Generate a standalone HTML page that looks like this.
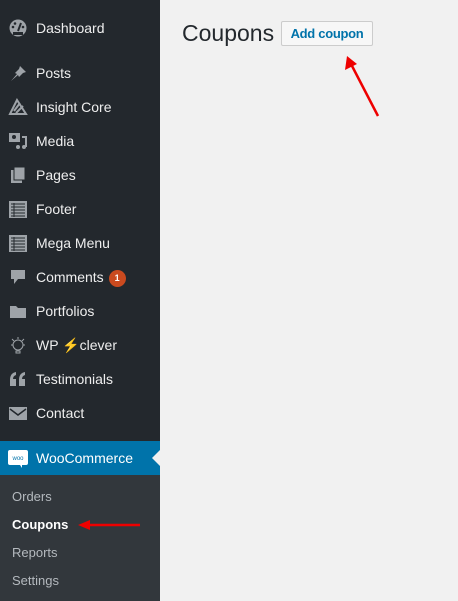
<!DOCTYPE html>
<html><head><style>
*{margin:0;padding:0;box-sizing:border-box}
body{width:458px;height:601px;background:#f1f1f1;font-family:"Liberation Sans",sans-serif;position:relative;overflow:hidden}
#side{position:absolute;left:0;top:0;width:160px;height:601px;background:#23282d}
.it{position:absolute;left:0;width:160px;height:34px;color:#eee;font-size:14px;line-height:34px;padding-left:36px}
.ic{position:absolute;left:8px;top:8px;width:20px;height:18px}
.woo{position:absolute;left:0;top:441px;width:160px;height:34px;background:#0073aa;color:#fff;font-size:14px;line-height:34px;padding-left:36px}
.sub{position:absolute;left:0;top:475px;width:160px;height:126px;background:#32373c}
.s{position:absolute;left:12px;font-size:13px;color:#b4b9be}
.badge{display:inline-block;width:17px;height:17px;border-radius:50%;background:#ca4a1f;color:#fff;font-size:9px;line-height:17px;text-align:center;vertical-align:middle;margin-left:5px;font-weight:bold}
</style></head><body>
<div id="side">
<div class="it" style="top:11px"><svg class="ic" viewBox="0 0 20 18"><circle cx="10" cy="9" r="8.5" fill="#9ea3a8"/><circle cx="5" cy="8" r="1.3" fill="#23282d"/><circle cx="7" cy="4.5" r="1.3" fill="#23282d"/><circle cx="15" cy="8" r="1.3" fill="#23282d"/><path d="M10 12 L13 4" stroke="#23282d" stroke-width="2"/><rect x="5" y="13" width="10" height="3" fill="#23282d"/></svg>Dashboard</div>
<div class="it" style="top:56px"><svg class="ic" viewBox="0 0 20 18"><path d="M12 2 L18 8 L15 9 L11 13 L10 11 L3 17 L9 10 L7 9 L11 5Z" fill="#9ea3a8"/></svg>Posts</div>
<div class="it" style="top:90px"><svg class="ic" viewBox="0 0 20 18"><path d="M2 16 L9 2 L18 16 Z M6 13 L12 5 M8 15 L15 8" stroke="#9ea3a8" stroke-width="2" fill="none"/></svg>Insight Core</div>
<div class="it" style="top:124px"><svg class="ic" viewBox="0 0 20 18"><rect x="1" y="1" width="11" height="9" fill="#9ea3a8"/><circle cx="6" cy="5" r="2" fill="#23282d"/><path d="M14 5 H18 V15" stroke="#9ea3a8" stroke-width="2" fill="none"/><circle cx="10" cy="15" r="2" fill="#9ea3a8"/><circle cx="16" cy="15" r="2" fill="#9ea3a8"/></svg>Media</div>
<div class="it" style="top:158px"><svg class="ic" viewBox="0 0 20 18"><rect x="3" y="4" width="11" height="13" fill="#9ea3a8"/><rect x="6" y="1" width="11" height="13" fill="#9ea3a8" stroke="#23282d"/></svg>Pages</div>
<div class="it" style="top:192px"><svg class="ic" viewBox="0 0 20 18"><rect x="1" y="1" width="18" height="17" fill="#9ea3a8"/><path d="M3 4h14M3 7h14M3 10h14M3 13h14M3 16h14M6 3v14" stroke="#23282d" stroke-width="1"/></svg>Footer</div>
<div class="it" style="top:226px"><svg class="ic" viewBox="0 0 20 18"><rect x="1" y="1" width="18" height="17" fill="#9ea3a8"/><path d="M3 4h14M3 7h14M3 10h14M3 13h14M3 16h14M6 3v14" stroke="#23282d" stroke-width="1"/></svg>Mega Menu</div>
<div class="it" style="top:260px"><svg class="ic" viewBox="0 0 20 18"><path d="M3 2 H17 V11 H10 L6 16 V11 H3Z" fill="#9ea3a8"/></svg>Comments<span class="badge">1</span></div>
<div class="it" style="top:294px"><svg class="ic" viewBox="0 0 20 18"><path d="M2 4 H8 L10 6 H18 V16 H2Z" fill="#9ea3a8"/></svg>Portfolios</div>
<div class="it" style="top:328px"><svg class="ic" viewBox="0 0 20 18"><circle cx="10" cy="9" r="5" fill="none" stroke="#9ea3a8"/><path d="M10 1v2M3 9h2M15 9h2M4 3l2 2M16 3l-2 2M8 15h4v2h-4z" stroke="#9ea3a8" fill="none"/></svg>WP <span style="color:#f6c300">⚡</span>clever</div>
<div class="it" style="top:362px"><svg class="ic" viewBox="0 0 20 18"><path d="M2 16 V10 Q2 3 8 2 V5 Q5 6 5 9 H8 V16Z M11 16 V10 Q11 3 17 2 V5 Q14 6 14 9 H17 V16Z" fill="#9ea3a8"/></svg>Testimonials</div>
<div class="it" style="top:396px"><svg class="ic" viewBox="0 0 20 18"><rect x="1" y="3" width="18" height="13" fill="#9ea3a8"/><path d="M2 5 L10 11 L18 5" stroke="#23282d" stroke-width="1.5" fill="none"/></svg>Contact</div>
</div>
<div class="woo"><svg style="position:absolute;left:8px;top:8px" width="20" height="20" viewBox="0 0 20 20"><rect x="0" y="1" width="20" height="15" rx="2" fill="#fff"/><path d="M12 16 L14 19 L14 16Z" fill="#fff"/><text x="10" y="11" font-size="6" fill="#0073aa" text-anchor="middle">woo</text></svg>WooCommerce<svg style="position:absolute;right:0;top:9px" width="8" height="16"><path d="M8 0 L0 8 L8 16Z" fill="#f1f1f1"/></svg></div>
<div class="sub">
<div class="s" style="top:14px">Orders</div>
<div class="s" style="top:42px;color:#fff;font-weight:bold">Coupons</div>
<div class="s" style="top:70px">Reports</div>
<div class="s" style="top:98px">Settings</div>
</div>
<div style="position:absolute;left:182px;top:20px;font-size:23px;color:#23282d">Coupons</div>
<div style="position:absolute;left:281px;top:21px;width:92px;height:25px;border:1px solid #ccc;background:#f7f7f7;border-radius:2px;color:#0073aa;font-size:13px;line-height:23px;text-align:center;font-weight:bold;letter-spacing:-0.3px">Add coupon</div>
<svg style="position:absolute;left:0;top:0" width="458" height="601">
<path d="M378 116 L351 64" stroke="#e00" stroke-width="2.5"/><path d="M347 56 L345 70 L357 64Z" fill="#e00"/>
<path d="M140 525 L88 525" stroke="#e00" stroke-width="2.5"/><path d="M78 525 L90 520 L90 530Z" fill="#e00"/>
</svg>
</body></html>
